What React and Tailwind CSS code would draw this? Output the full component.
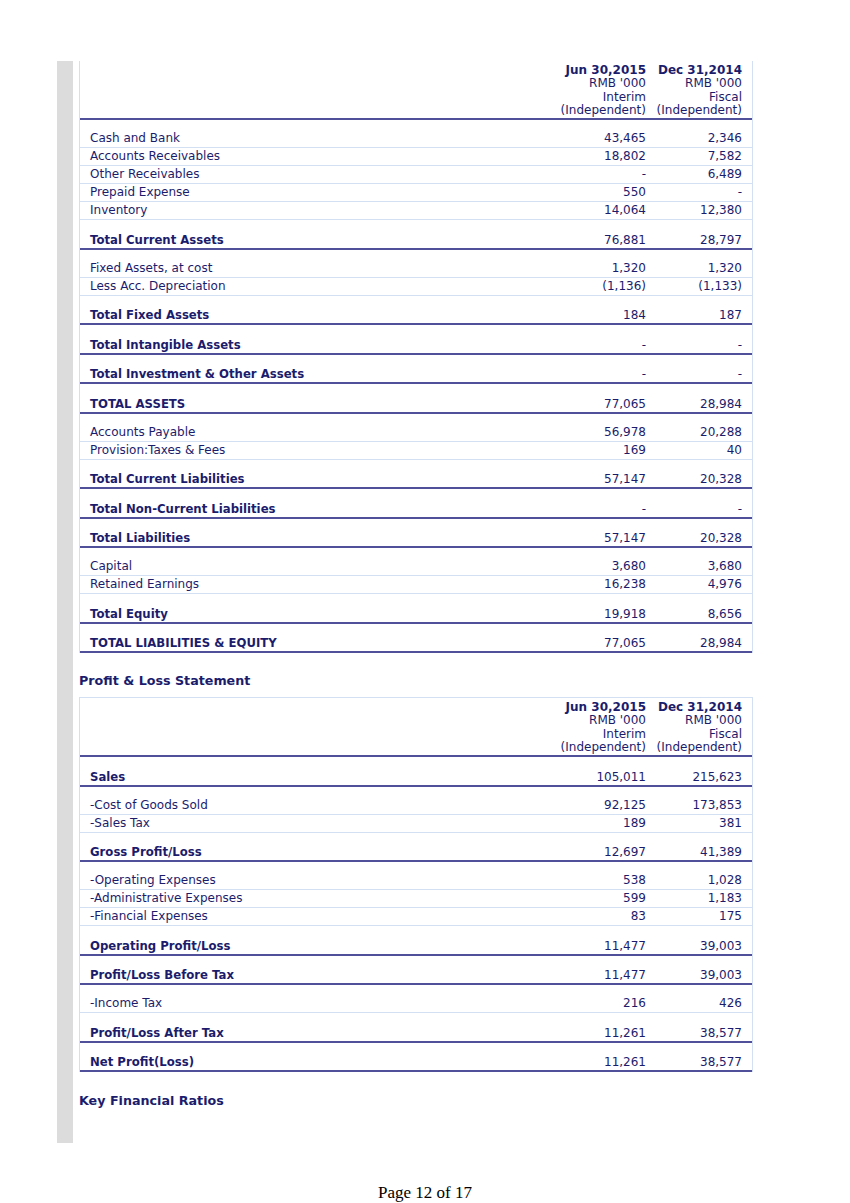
import React from "react";

const balance = [
  { l: "Cash and Bank", a: "43,465", b: "2,346" },
  { l: "Accounts Receivables", a: "18,802", b: "7,582" },
  { l: "Other Receivables", a: "-", b: "6,489" },
  { l: "Prepaid Expense", a: "550", b: "-" },
  { l: "Inventory", a: "14,064", b: "12,380" },
  { l: "Total Current Assets", a: "76,881", b: "28,797", t: true },
  { l: "Fixed Assets, at cost", a: "1,320", b: "1,320" },
  { l: "Less Acc. Depreciation", a: "(1,136)", b: "(1,133)" },
  { l: "Total Fixed Assets", a: "184", b: "187", t: true },
  { l: "Total Intangible Assets", a: "-", b: "-", t: true },
  { l: "Total Investment & Other Assets", a: "-", b: "-", t: true },
  { l: "TOTAL ASSETS", a: "77,065", b: "28,984", t: true },
  { l: "Accounts Payable", a: "56,978", b: "20,288" },
  { l: "Provision:Taxes & Fees", a: "169", b: "40" },
  { l: "Total Current Liabilities", a: "57,147", b: "20,328", t: true },
  { l: "Total Non-Current Liabilities", a: "-", b: "-", t: true },
  { l: "Total Liabilities", a: "57,147", b: "20,328", t: true },
  { l: "Capital", a: "3,680", b: "3,680" },
  { l: "Retained Earnings", a: "16,238", b: "4,976" },
  { l: "Total Equity", a: "19,918", b: "8,656", t: true },
  { l: "TOTAL LIABILITIES & EQUITY", a: "77,065", b: "28,984", t: true },
];

const pl = [
  { l: "Sales", a: "105,011", b: "215,623", t: true },
  { l: "-Cost of Goods Sold", a: "92,125", b: "173,853" },
  { l: "-Sales Tax", a: "189", b: "381" },
  { l: "Gross Profit/Loss", a: "12,697", b: "41,389", t: true },
  { l: "-Operating Expenses", a: "538", b: "1,028" },
  { l: "-Administrative Expenses", a: "599", b: "1,183" },
  { l: "-Financial Expenses", a: "83", b: "175" },
  { l: "Operating Profit/Loss", a: "11,477", b: "39,003", t: true },
  { l: "Profit/Loss Before Tax", a: "11,477", b: "39,003", t: true },
  { l: "-Income Tax", a: "216", b: "426" },
  { l: "Profit/Loss After Tax", a: "11,261", b: "38,577", t: true },
  { l: "Net Profit(Loss)", a: "11,261", b: "38,577", t: true },
];

function Header() {
  return (
    <div className="h-[59px] border-b-2 border-[#50509a] flex justify-end pt-[3px] pr-[10px] leading-[13.33px] text-[12px]">
      <div className="w-[96px] text-right flex flex-col">
        <span className="font-bold">Jun 30,2015</span>
        <span>RMB '000</span>
        <span>Interim</span>
        <span className="whitespace-nowrap">(Independent)</span>
      </div>
      <div className="w-[96px] text-right flex flex-col">
        <span className="font-bold">Dec 31,2014</span>
        <span>RMB '000</span>
        <span>Fiscal</span>
        <span className="whitespace-nowrap">(Independent)</span>
      </div>
    </div>
  );
}

function Row({ r }) {
  return (
    <div
      className={
        r.t
          ? "h-[19.5px] border-b-2 border-[#50509a] grid grid-cols-[1fr_96px_96px] pt-[1.5px] leading-[16px] pl-[10px] pr-[10px] text-[12px]"
          : "h-[18px] border-b border-[#d3dff2] grid grid-cols-[1fr_96px_96px] leading-[17px] pl-[10px] pr-[10px] text-[12px]"
      }
    >
      <div className={r.t ? "font-bold text-[11.7px] whitespace-nowrap" : "whitespace-nowrap"}>
        {r.l}
      </div>
      <div className="text-right">{r.a}</div>
      <div className="text-right">{r.b}</div>
    </div>
  );
}

function Rows({ items }) {
  return items.map((r, i) => {
    const sp = i === 0 || r.t || items[i - 1].t;
    return (
      <React.Fragment key={i}>
        {sp && <div className="h-[10px]" />}
        <Row r={r} />
      </React.Fragment>
    );
  });
}

export default function App() {
  return (
    <div className="bg-white w-[850px] min-h-[1203px] pt-[61px] font-['DejaVu_Sans',sans-serif] text-[#1c1c6c]">
      <div className="flex ml-[57px] w-[696px]">
        <div className="w-[16px] shrink-0 bg-[#dcdcdc]" />
        <div className="ml-[6px] flex-1 pb-[34px]">
          <div className="border-l border-r border-[#d3dff2]">
            <Header />
            <Rows items={balance} />
          </div>
          <div className="mt-[20px] mb-[8px] leading-[16px] text-[12.7px] font-bold">
            Profit &amp; Loss Statement
          </div>
          <div className="border border-b-0 border-[#d3dff2]">
            <Header />
            <Rows items={pl} />
          </div>
          <div className="mt-[21px] leading-[16px] text-[12.7px] font-bold">
            Key Financial Ratios
          </div>
        </div>
      </div>
      <div className="mt-[40px] text-center font-['Liberation_Serif',serif] text-[17px] leading-[19px] text-black">
        Page 12 of 17
      </div>
    </div>
  );
}
